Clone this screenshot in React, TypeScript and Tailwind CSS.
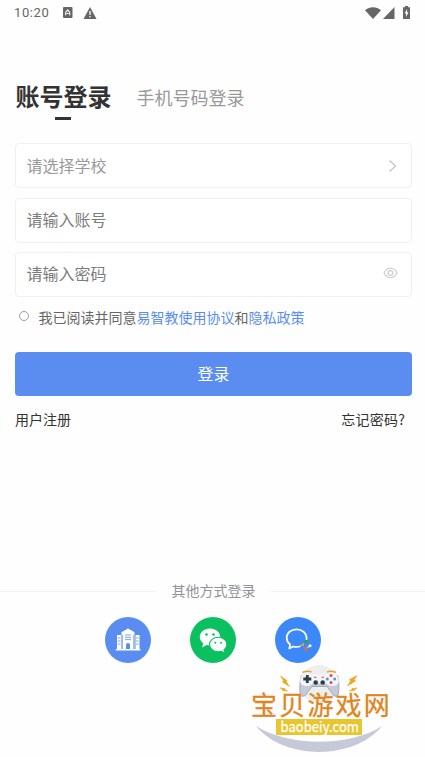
import React from "react";

function StatusBar() {
  return (
    <header className="flex h-[25px] items-center justify-between pr-[14px] pl-[14px] text-[#666]">
      <div className="flex items-center">
        <span className="w-[49px] font-[Roboto,sans-serif] text-[13px] leading-[25px] tracking-[0.6px]">10:20</span>
        <svg className="h-[11px] w-[10px]" viewBox="0 0 10 11">
          <rect width="9.5" height="11" rx="1" fill="#666" />
          <path d="M2.7 8.200V5.500l2-2.500 2 2.500v2.700M3.700 6.500h2" fill="none" stroke="#fff" strokeWidth="1.100" />
        </svg>
        <svg className="ml-[10px] h-[12px] w-[14px]" viewBox="0 0 13 12">
          <path d="M6.500 0 13 12H0z" fill="#666" />
          <path d="M6.500 4v4M6.500 9v1.300" stroke="#fff" strokeWidth="1.300" />
        </svg>
      </div>
      <div className="flex items-center">
        <svg className="h-[12px] w-[16px]" viewBox="0 0 16 12">
          <path d="M0 3.200C4.500-.8 11.500-.8 16 3.200L8 12z" fill="#666" />
        </svg>
        <svg className="ml-[2px] h-[12px] w-[12px]" viewBox="0 0 12 12">
          <path d="M11.500 0v12H0z" fill="#666" />
        </svg>
        <svg className="mr-[1px] ml-[8px] h-[13px] w-[7px]" viewBox="0 0 7 13">
          <path d="M2 0h3v1.300h2V13H0V1.300h2z" fill="#666" />
          <path d="M4.100 3 1.600 7.400h1.500V11l2.400-4.700H4.100z" fill="#fff" />
        </svg>
      </div>
    </header>
  );
}

function Field({ label, muted, children }: { label: string; muted?: boolean; children?: React.ReactNode }) {
  return (
    <div className="flex h-[45px] items-center justify-between rounded-[4px] border border-[#f0f0f0] bg-white pr-[13px] pl-[10.500px]">
      <span className={muted ? "pb-[2px] text-[16px] leading-6 text-[#999]" : "pb-[3px] text-[16px] leading-6 text-[#7c7c7c]"}>{label}</span>
      {children}
    </div>
  );
}

function SchoolIcon() {
  return (
    <svg className="size-[46px]" viewBox="0 0 46 46">
      <circle cx="23" cy="23" r="23" fill="#5b8df0" />
      <path d="M16.500 15.200 23 11.500l6.500 3.700V32h-13z" fill="#fff" />
      <path d="M12 18h4v14h-4zM30.500 18h4v14h-4zM10.800 32h24.600v1.600H10.800z" fill="#fff" />
      <path d="M20 18h6M20 20.300h6M20 22.600h6M12.800 21h2.600M12.800 24h2.600M12.800 27h2.600M31 21h2.600M31 24h2.600M31 27h2.600M17.300 18v14M28.800 18v14" stroke="#5b8df0" strokeWidth=".8" />
      <path d="M21 32v-4a2 2 0 0 1 4 0v4z" fill="#5b8df0" />
    </svg>
  );
}

function WechatIcon() {
  return (
    <svg className="size-[46px]" viewBox="0 0 46 46">
      <circle cx="23" cy="23" r="23" fill="#0bc15f" />
      <path d="M20 11.500c-5.800 0-10.200 3.800-10.200 8.400 0 2.700 1.300 4.800 3.500 6.400l-1.200 4.200 4.400-2.400c1.200.3 2.200.4 3.500.4 5.700 0 10.200-3.800 10.200-8.600s-4.400-8.400-10.200-8.400z" fill="#fff" />
      <path d="M28.200 20.300c-4.900 0-8.600 3.200-8.600 7.200s3.700 7.200 8.600 7.200c1.100 0 2.100-.1 3.100-.4l3.400 1.900-.8-3.100c1.900-1.300 3-3.300 3-5.600 0-4-3.800-7.200-8.700-7.200z" fill="#fff" stroke="#0bc15f" strokeWidth="1.100" />
      <g fill="#0bc15f">
        <circle cx="16.500" cy="17.500" r="1.300" />
        <circle cx="23.500" cy="17.500" r="1.300" />
        <circle cx="25.300" cy="25.700" r="1" />
        <circle cx="31.100" cy="25.700" r="1" />
      </g>
    </svg>
  );
}

function ChatIcon() {
  return (
    <svg className="size-[46px]" viewBox="0 0 46 46">
      <circle cx="23" cy="23" r="23" fill="#3d88f8" />
      <path d="M25.500 29.300c-2.700 1-4.900.9-7.400.2L14.300 31.500l.8-4c-2-1.600-3.400-3.900-3.400-6.600 0-4.900 4.300-8.600 9.900-8.600s10 3.800 10 8.800c0 1-.1 1.400-.3 2" fill="none" stroke="#fff" strokeWidth="1.700" strokeLinejoin="round" />
      <path d="m28.500 25 2-2.500 3.500 1.500-2 3z" fill="#329c5e" />
      <path d="m24.800 28.500 4-2.800v3.600z" fill="#d9a83f" />
      <path d="m28.500 31.500 2.500-1.800 2.500 2.300-2 2.500z" fill="#df694a" />
      <circle cx="35" cy="28.800" r="1.500" fill="#fff" />
      <path d="m32.300 30.500 2.500-1.500" stroke="#fff" strokeWidth="1" />
    </svg>
  );
}

function SiteMark() {
  return (
    <svg className="pointer-events-none absolute top-[605px] left-[240px] h-[150px] w-[160px]" viewBox="0 0 160 150">
      <circle cx="79" cy="79" r="19" fill="#eeeeef" />
      <path d="M16 121C44 155.500 114 155.500 142 121C110 142 49 142 16 121z" fill="#c6c9d7" />
      <path d="M61 71c5-3 10-2 13 0h11c3-2 8-3 13 0 1 5 1.500 13 0 19.500-3 2-5 0-6.500-3l-4.500-6H72l-4.500 6c-1.500 3-4 5-7 3-1.500-6-.5-14.500.5-19.500z" fill="#c6c9d7" stroke="#8f93a4" strokeWidth=".7" />
      <path d="M60.500 73c1.500-6 9.500-6.500 13-3.500h12c3.500-3 11.500-2.500 13 3.500 1.500 6-2 8-6 8-3 0-4-.5-6-2.500H72.500c-2 2-3 2.500-6 2.500-4 0-7.500-2-6-8z" fill="#f4f4f7" />
      <path d="M62.500 67.500c3-1.500 6-1.500 9-.5M87 67c3-1 6-1 9 .5" fill="none" stroke="#e2a33d" strokeWidth="1.500" />
      <path d="M67.300 70v8M63.300 74h8" stroke="#263f4e" strokeWidth="2.800" />
      <circle cx="75.700" cy="77.500" r="2.300" fill="#263f4e" />
      <circle cx="82.700" cy="77.500" r="2.300" fill="#263f4e" />
      <path d="M74 72.300h2.500M81.500 72.300H84" stroke="#d36584" strokeWidth="1.300" />
      <circle cx="91" cy="70.500" r="1.500" fill="#d94c50" />
      <circle cx="91" cy="77.500" r="1.500" fill="#d94c50" />
      <circle cx="94.700" cy="74" r="1.500" fill="#4aa2c5" />
      <circle cx="87.300" cy="74" r="1.500" fill="#4aa2c5" />
      <path d="m40.500 71 6.500 4.500-.5 1.500 3 4.500-7-4.500 1-1.500zM117 70.500l-7.500 4 1 1.500-3 5 8-5-1.200-1.500zM40 83l5 .5.5 1.500 2 1-5-.5-.5-1.500zM117 83l-5 .5-.5 1.500-2 1 5-.5.5-1.500z" fill="#eda820" stroke="#eda820" strokeWidth=".6" />
      <text x="11" y="110" fill="#df851d" stroke="#df851d" strokeWidth=".3" fontSize="26" fontWeight="400" letterSpacing="2.200" fontFamily="'Noto Sans CJK SC',sans-serif">宝贝游戏网</text>
      <rect x="36" y="114" width="86" height="16" fill="#e8c62f" />
      <text x="40.500" y="126.500" fill="#fff" stroke="#fff" strokeWidth=".25" fontSize="14.500" fontWeight="400" textLength="78.500" lengthAdjust="spacingAndGlyphs" fontFamily="'Noto Sans CJK SC',sans-serif">baobeiy.com</text>
    </svg>
  );
}

export default function App() {
  return (
    <div className="relative flex h-[757px] w-[425px] flex-col overflow-hidden bg-[#fefefe] font-['Noto_Sans_CJK_SC',sans-serif]">
      <StatusBar />
      <main className="pr-[13px] pl-[15px]">
        <nav className="flex h-[118px] pt-[53px]">
          <div className="flex w-[97px] flex-col items-center">
            <span className="text-[24px] leading-[36px] font-bold whitespace-nowrap text-[#333]">账号登录</span>
            <span className="mt-[3px] mr-[1px] h-[3px] w-4 bg-[#333]" />
          </div>
          <span className="ml-[24.500px] pt-px text-[18px] leading-[36px] text-[#999]">手机号码登录</span>
        </nav>
        <div className="flex flex-col gap-[9.500px]">
          <Field label="请选择学校" muted>
            <svg className="mr-[1px] h-[14px] w-[9px]" viewBox="0 0 9 14">
              <path d="m1.500 1.500 6 5.500-6 5.500" fill="none" stroke="#c6c6c6" strokeWidth="1.400" />
            </svg>
          </Field>
          <Field label="请输入账号" />
          <Field label="请输入密码">
            <svg className="mb-[4px] h-[12px] w-[15px]" viewBox="0 0 15 12">
              <path d="M1 6c3.200-6.300 9.800-6.300 13 0-3.200 6.300-9.800 6.300-13 0z" fill="none" stroke="#cacaca" strokeWidth="1.100" />
              <circle cx="7.500" cy="6" r="2.400" fill="none" stroke="#cacaca" strokeWidth="1.100" />
            </svg>
          </Field>
        </div>
        <div className="mt-[9px] flex h-[22px] items-center pl-[4px] text-[14px] leading-[22px] text-[#666]">
          <span className="mr-[9.500px] mb-[3px] size-[10px] rounded-full border border-[#a0a0a0]" />
          <span>我已阅读并同意<span className="text-[#5b8df0]">易智教使用协议</span>和<span className="text-[#5b8df0]">隐私政策</span></span>
        </div>
        <button className="mt-[24px] block h-[44px] w-full rounded-[4px] bg-[#5b8df0] pb-[2px] text-[16px] text-white">登录</button>
        <div className="mt-[12px] flex justify-between pr-[7px] text-[14px] leading-[22px] text-[#333]">
          <span>用户注册</span>
          <span className="tracking-[0.200px]">忘记密码?</span>
        </div>
      </main>
      <section className="mt-auto h-[177px]">
        <div className="flex h-[22px] items-center">
          <span className="h-px w-[156px] bg-[#f3f3f3]" />
          <span className="flex-1 pb-px text-center text-[14px] leading-[21px] text-[#909399]">其他方式登录</span>
          <span className="h-px w-[154px] bg-[#f3f3f3]" />
        </div>
        <div className="mt-[15px] flex gap-[39px] pl-[105px]">
          <SchoolIcon />
          <WechatIcon />
          <ChatIcon />
        </div>
      </section>
      <SiteMark />
    </div>
  );
}
